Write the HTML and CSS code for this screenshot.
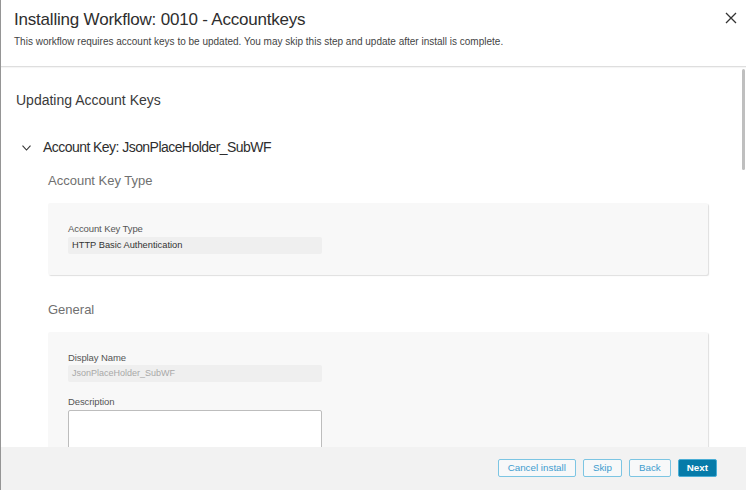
FILE: index.html
```html
<!DOCTYPE html>
<html lang="en">
<head>
<meta charset="utf-8">
<title>Installing Workflow</title>
<link rel="stylesheet" href="styles.css">
</head>
<body>
<div class="modal">
  <header class="modal-header">
    <div class="header-row">
      <h1 class="title">Installing Workflow: 0010 - Accountkeys</h1>
      <button class="close" aria-label="Close">
        <svg width="12" height="12" viewBox="0 0 12 12"><path d="M1 1 L11 11 M11 1 L1 11" stroke="#333" stroke-width="1.3" fill="none"/></svg>
      </button>
    </div>
    <p class="subtitle">This workflow requires account keys to be updated. You may skip this step and update after install is complete.</p>
  </header>
  <main class="modal-body">
    <h2 class="section-title">Updating Account Keys</h2>
    <div class="key-row">
      <svg class="chevron" width="9" height="6" viewBox="0 0 9 6"><path d="M0.5 0.6 L4.5 5 L8.5 0.6" stroke="#333" stroke-width="1.1" fill="none"/></svg>
      <span class="key-name">Account Key: JsonPlaceHolder_SubWF</span>
    </div>
    <div class="key-content">
      <h3 class="group-title">Account Key Type</h3>
      <div class="panel">
        <div class="field">
          <label class="field-label">Account Key Type</label>
          <div class="input readonly">HTTP Basic Authentication</div>
        </div>
      </div>
      <h3 class="group-title general">General</h3>
      <div class="panel panel-open">
        <div class="field">
          <label class="field-label">Display Name</label>
          <div class="input disabled">JsonPlaceHolder_SubWF</div>
        </div>
        <div class="field">
          <label class="field-label">Description</label>
          <div class="textarea"></div>
        </div>
      </div>
    </div>
    <div class="scroll-thumb"></div>
  </main>
  <footer class="modal-footer">
    <button class="btn">Cancel install</button>
    <button class="btn">Skip</button>
    <button class="btn">Back</button>
    <button class="btn btn-primary">Next</button>
  </footer>
</div>
</body>
</html>
```
FILE: styles.css
```css
* { box-sizing: border-box; }
html, body { margin: 0; padding: 0; background: #fff; }
body { font-family: "Liberation Sans", Arial, sans-serif; color: #333; }

.modal {
  width: 746px;
  height: 490px;
  display: flex;
  flex-direction: column;
  border-left: 1px solid #959595;
  overflow: hidden;
}

.modal-header {
  height: 67px;
  flex: none;
  border-bottom: 1px solid #dedede;
  box-shadow: 0 1px 1px rgba(0,0,0,0.04);
  padding: 10px 9px 0 13px;
  position: relative;
  z-index: 1;
}
.header-row {
  display: flex;
  justify-content: space-between;
  align-items: flex-start;
}
.title {
  margin: 0;
  font-size: 17px;
  line-height: 20px;
  font-weight: normal;
  letter-spacing: -0.2px;
  color: #2e2e2e;
}
.close {
  border: 0;
  background: none;
  padding: 0;
  margin-top: 2px;
  width: 12px;
  height: 12px;
  display: flex;
}
.subtitle {
  margin: 6px 0 0;
  font-size: 10px;
  line-height: 12px;
  color: #444;
}

.modal-body {
  flex: 1;
  position: relative;
  overflow: hidden;
  padding: 25px 38px 0 15px;
}
.section-title {
  margin: 0;
  font-size: 14px;
  line-height: 16px;
  font-weight: normal;
  color: #3a3a3a;
}
.key-row {
  display: flex;
  align-items: center;
  margin-top: 31px;
  height: 16px;
}
.chevron { margin-left: 6px; margin-right: 12px; margin-top: 2px; flex: none; }
.key-name {
  font-size: 14px;
  line-height: 16px;
  letter-spacing: -0.55px;
  color: #2e2e2e;
}
.key-content { margin-left: 32px; }
.group-title {
  margin: 18px 0 14px;
  font-size: 13px;
  line-height: 16px;
  font-weight: normal;
  color: #707070;
}
.group-title.general { margin-top: 27px; }

.panel {
  background: #f8f8f8;
  border-radius: 2px;
  box-shadow: 1px 1px 1px rgba(0,0,0,0.13);
  padding: 20px 20px 21px;
  display: flex;
  flex-direction: column;
  gap: 14px;
}
.panel-open { padding-bottom: 60px; }
.field { display: flex; flex-direction: column; }
.field-label {
  font-size: 9.5px;
  line-height: 12px;
  letter-spacing: -0.1px;
  color: #555;
  margin-bottom: 1.5px;
}
.input {
  width: 254px;
  height: 17px;
  background: #efefef;
  border-radius: 2px;
  padding: 0 4px;
  font-size: 9.3px;
  line-height: 17px;
  color: #333;
}
.input.disabled { color: #a8a8a8; font-size: 9px; }
.textarea {
  width: 254px;
  height: 60px;
  background: #fff;
  border: 1px solid #bdbdbd;
  border-radius: 2px;
}

.scroll-thumb {
  position: absolute;
  right: 1px;
  top: 2px;
  width: 3px;
  height: 101px;
  border-radius: 1.5px;
  background: #bfbfbf;
}

.modal-footer {
  height: 43px;
  flex: none;
  background: #f2f2f2;
  display: flex;
  justify-content: flex-end;
  align-items: center;
  gap: 7px;
  padding: 0 29px 1px 0;
  position: relative;
  z-index: 1;
}
.btn {
  height: 18px;
  padding: 0 9px;
  border: 1px solid #7cc5e3;
  border-radius: 2px;
  background: #f7f8f9;
  color: #3e9ccf;
  font-family: "Liberation Sans", Arial, sans-serif;
  font-size: 9.8px;
  line-height: 16px;
}
.btn-primary {
  background: #067ba9;
  border-color: #4aaed6;
  color: #fff;
  font-weight: bold;
  padding: 0 8px;
}
```
